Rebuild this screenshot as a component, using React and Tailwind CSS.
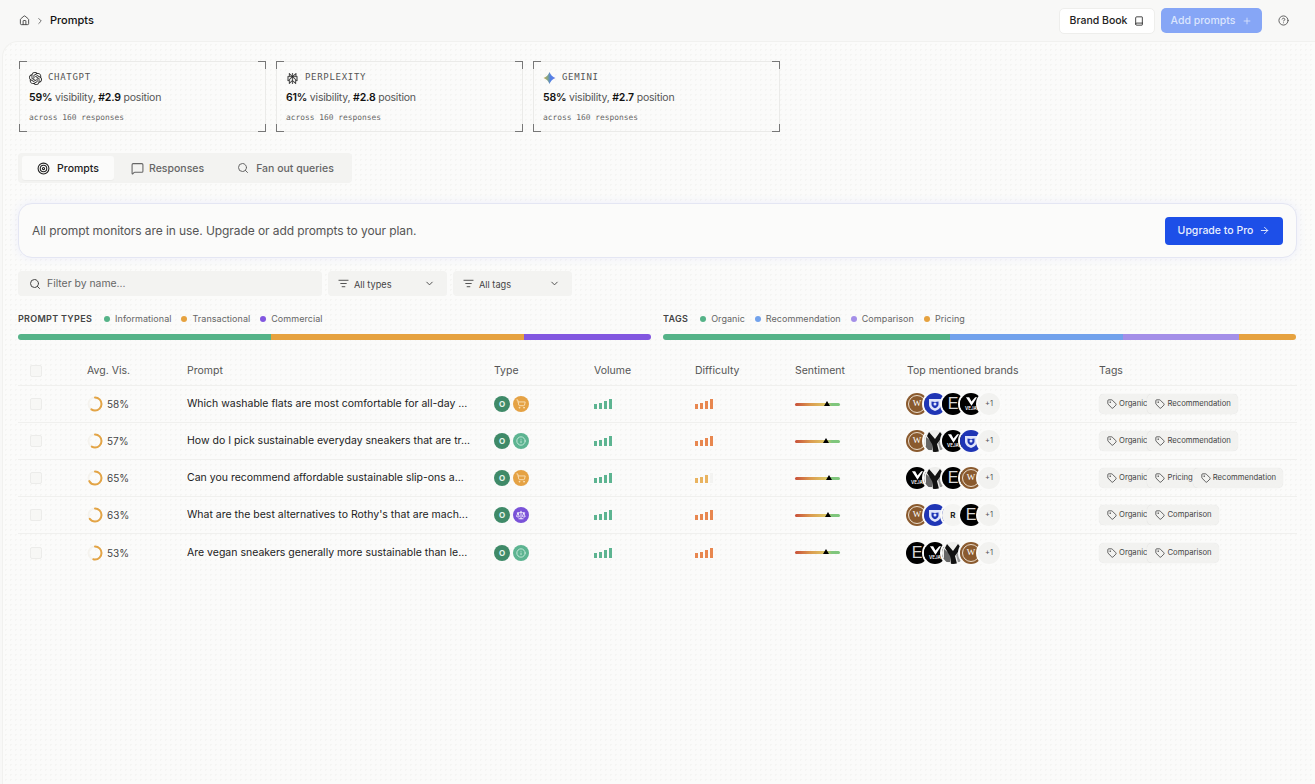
import { House, ChevronRight, Book, Plus, CircleHelp, Target, MessageSquare, Search, ListFilter, ChevronDown, ArrowRight, Tag, ShoppingCart, Info, Scale } from 'lucide-react';
import { SiOpenai, SiPerplexity } from 'react-icons/si';

const ENGINES = [
  { name: 'CHATGPT', vis: '59%', pos: '#2.9', logo: <SiOpenai size={13} className="text-[#222]" /> },
  { name: 'PERPLEXITY', vis: '61%', pos: '#2.8', logo: <SiPerplexity size={11} stroke="currentColor" strokeWidth={0.6} className="text-[#222]" /> },
  { name: 'GEMINI', vis: '58%', pos: '#2.7', logo: <GeminiLogo /> },
];

const ROWS = [
  { vis: 58, prompt: 'Which washable flats are most comfortable for all-day ...', type: 'cart', diff: 4, mark: 32, brands: ['w', 'c', 'e', 'v'], tags: ['Organic', 'Recommendation'] },
  { vis: 57, prompt: 'How do I pick sustainable everyday sneakers that are tr...', type: 'info', diff: 4, mark: 31, brands: ['w', 'm', 'v', 'c'], tags: ['Organic', 'Recommendation'] },
  { vis: 65, prompt: 'Can you recommend affordable sustainable slip-ons a...', type: 'cart', diff: 3, mark: 34, brands: ['v', 'm', 'e', 'w'], tags: ['Organic', 'Pricing', 'Recommendation'] },
  { vis: 63, prompt: "What are the best alternatives to Rothy's that are mach...", type: 'scale', diff: 4, mark: 33, brands: ['w', 'c', 'r', 'e'], tags: ['Organic', 'Comparison'] },
  { vis: 53, prompt: 'Are vegan sneakers generally more sustainable than le...', type: 'info', diff: 4, mark: 31, brands: ['e', 'v', 'm', 'w'], tags: ['Organic', 'Comparison'] },
];

const ROW_GRID = 'grid grid-cols-[69px_100px_307px_100px_101px_100px_112px_192px_1fr] items-center';

function GeminiLogo() {
  return (
    <svg width="14" height="14" viewBox="0 0 24 24">
      <defs>
        <linearGradient id="gem" x1="0" y1="0.5" x2="1" y2="0.5">
          <stop offset="0" stopColor="#c9a94a" />
          <stop offset="0.35" stopColor="#7fa58a" />
          <stop offset="0.6" stopColor="#4f7fe8" />
          <stop offset="1" stopColor="#6f7fe0" />
        </linearGradient>
      </defs>
      <path d="M12 1Q15 9 23 12 15 15 12 23 9 15 1 12 9 9 12 1z" fill="url(#gem)" />
    </svg>
  );
}

function Corners() {
  return (
    <>
      <span className="absolute -left-px -top-px h-2 w-2 border-l border-t border-[#777]" />
      <span className="absolute -right-px -top-px h-2 w-2 border-r border-t border-[#777]" />
      <span className="absolute -left-px -bottom-px h-2 w-2 border-l border-b border-[#777]" />
      <span className="absolute -right-px -bottom-px h-2 w-2 border-r border-b border-[#777]" />
    </>
  );
}

function EngineCard({ engine }) {
  return (
    <div className="relative h-[71px] w-[247px] border border-[#ebebe9] pl-[9px] pt-[9px]">
      <Corners />
      <div className="flex h-[14px] items-center gap-[6px]">
        <span className="flex w-[13px] justify-center">{engine.logo}</span>
        <span className="font-['DejaVu_Sans_Mono',monospace] text-[9px] tracking-[0.7px] text-[#555]">{engine.name}</span>
      </div>
      <p className="mt-[6px] text-[10.5px] leading-[14px] tracking-[-0.2px] text-[#555]">
        <b className="font-semibold text-[#111]">{engine.vis}</b> visibility, <b className="font-semibold text-[#111]">{engine.pos}</b> position
      </p>
      <p className="mt-[7px] font-['DejaVu_Sans_Mono',monospace] text-[7.9px] leading-[12px] text-[#666]">across 160 responses</p>
    </div>
  );
}

function LegendBar({ title, items, className }) {
  return (
    <div className={className}>
      <div className="flex h-[12px] items-center">
        <span className="mr-[12px] text-[9px] font-semibold tracking-[0.3px] text-[#444]">{title}</span>
        {items.map((item) => (
          <span key={item.label} className="mr-[10px] flex items-center gap-[5px] text-[9px] tracking-[0.05px] text-[#666]">
            <span className={`h-[6px] w-[6px] rounded-full ${item.color}`} />
            {item.label}
          </span>
        ))}
      </div>
      <div className="mt-[9px] flex h-[6px] overflow-hidden rounded-full">
        {items.map((item) => (
          <span key={item.label} className={`h-full ${item.color} ${item.width}`} />
        ))}
      </div>
    </div>
  );
}

function Ring({ value }) {
  const c = 2 * Math.PI * 6.5;
  return (
    <svg width="16" height="16" viewBox="0 0 16 16" className="-rotate-90">
      <circle cx="8" cy="8" r="6.5" fill="none" stroke="#f5f3ee" strokeWidth="2" />
      <circle cx="8" cy="8" r="6.5" fill="none" stroke="#e3a445" strokeWidth="2" strokeLinecap="round" strokeDasharray={`${(c * value) / 100} ${c}`} />
    </svg>
  );
}

function TypeBadge({ type }) {
  if (type === 'cart') {
    return (
      <span className="flex h-4 w-4 items-center justify-center rounded-full bg-[#e5a244] text-[#fbe7c4]">
        <ShoppingCart size={10} />
      </span>
    );
  }
  if (type === 'scale') {
    return (
      <span className="flex h-4 w-4 items-center justify-center rounded-full bg-[#7a52d8] text-white">
        <Scale size={10} />
      </span>
    );
  }
  return (
    <span className="flex h-4 w-4 items-center justify-center rounded-full bg-[#5db491] text-[#d5f0e3]">
      <Info size={10} />
    </span>
  );
}

function Bars({ filled, color, empty }) {
  const heights = ['h-[5px]', 'h-[6px]', 'h-[8px]', 'h-[10px]'];
  return (
    <div className="flex items-end gap-[2px]">
      {heights.map((h, i) => (
        <span key={h} className={`w-[3px] ${h} ${i < filled ? color : empty}`} />
      ))}
    </div>
  );
}

function Sentiment({ mark }) {
  return (
    <div className="relative h-[3px] w-[45px] rounded-full bg-[linear-gradient(90deg,#c8503a_0%,#dc9b4f_35%,#dcc765_68%,#7fc67c_82%,#7fc67c_100%)]">
      <span className="absolute -top-[2px] -ml-[3px] h-0 w-0 border-x-[3px] border-b-[5px] border-x-transparent border-b-black" style={{ left: mark }} />
    </div>
  );
}

function BrandLogo({ id }) {
  if (id === 'w') {
    return (
      <span className="flex h-full w-full items-center justify-center rounded-full bg-[#8a5a2e]">
        <span className="flex h-[18px] w-[18px] items-center justify-center rounded-full border border-[#e9dccb] font-['Liberation_Serif',serif] text-[9px] text-white">W</span>
      </span>
    );
  }
  if (id === 'c') {
    return (
      <span className="block h-full w-full rounded-full bg-[#1f35b5]">
        <svg viewBox="0 0 22 22" className="h-full w-full">
          <path d="M5 6c4 0 8 0 12 0v5.500c0 3.500-3 5.500-6 6.500-3-1-6-3-6-6.500z" fill="#dfe4fa" />
          <path d="M7.500 8.500c2.300.5 4.700.5 7 0v3c0 2-1.700 3-3.500 3.800-1.800-.8-3.500-1.800-3.500-3.800z" fill="#1f35b5" />
          <circle cx="11" cy="11" r="1.500" fill="#dfe4fa" />
        </svg>
      </span>
    );
  }
  if (id === 'e') {
    return <span className="flex h-full w-full items-center justify-center rounded-full bg-black font-['Liberation_Sans',sans-serif] text-[16px] text-[#d8d8d8]">E</span>;
  }
  if (id === 'v') {
    return (
      <span className="flex h-full w-full flex-col items-center justify-center rounded-full bg-black text-white">
        <svg viewBox="0 0 14 9" className="h-[9px] w-[13px]">
          <path d="M1 0h3.500L7 4.500 11 0h2L7 9z" fill="#fff" />
        </svg>
        <span className="text-[4.5px] font-semibold leading-[5px]">VEJA</span>
      </span>
    );
  }
  if (id === 'm') {
    return (
      <span className="block h-full w-full overflow-hidden rounded-full bg-[#eeeeec]">
        <svg viewBox="0 0 22 22" className="h-full w-full">
          <path d="M2 20V7l6 5v8z" fill="#666" />
          <path d="M5 2l6 7 5-7 3 4-6 8 2 8h-6l-1-8-5-8z" fill="#111" />
          <path d="M14 13l4-5 2 2v10h-4z" fill="#999" />
        </svg>
      </span>
    );
  }
  return <span className="flex h-full w-full items-center justify-center rounded-full bg-[#f4f4f2] text-[8px] font-bold text-[#222]">R</span>;
}

function Brands({ ids }) {
  return (
    <div className="-ml-[3px] flex">
      {ids.map((id, i) => (
        <span key={id} className={`h-[26px] w-[26px] rounded-full border-2 border-[#fbfbfa] ${i > 0 ? '-ml-2' : ''}`}>
          <BrandLogo id={id} />
        </span>
      ))}
      <span className="-ml-2 flex h-[26px] w-[26px] items-center justify-center rounded-full border-2 border-[#fbfbfa] bg-[#f2f2f0] text-[7.5px] text-[#555]">+1</span>
    </div>
  );
}

function Tags({ tags }) {
  return (
    <div className="flex w-fit">
      {tags.map((tag, i) => (
        <span key={tag} className={`flex h-5 items-center gap-[2px] rounded-[5px] bg-[#f2f2f0] pl-[8px] pr-[7px] text-[7.7px] text-[#444] shadow-[0_0_1px_rgba(0,0,0,0.12)] ${i > 0 ? '-ml-[7px]' : ''}`}>
          <Tag size={10} className="text-[#444]" />
          {tag}
        </span>
      ))}
    </div>
  );
}

function FilterSelect({ label }) {
  return (
    <div className="flex w-[119px] items-center rounded-[4px] bg-[#f3f3f1] pl-[10px] pr-[12px] text-[9.2px] text-[#444]">
      <ListFilter size={11} className="mr-[5px]" />
      <span className="pt-[2px]">{label}</span>
      <ChevronDown size={11} className="ml-auto" />
    </div>
  );
}

export default function App() {
  return (
    <div className="h-[784px] overflow-hidden bg-[#f8f8f7] font-['Inter',sans-serif] text-[#222]">
      {/* Top bar */}
      <header className="flex h-[41px] items-center pl-[19px] pr-[26px]">
        <House size={11} className="text-[#444]" />
        <ChevronRight size={10} className="ml-[5px] text-[#555]" />
        <span className="ml-[5px] text-[11px] font-medium text-[#111]">Prompts</span>
        <div className="ml-auto flex items-center">
          <button className="flex h-[26px] w-[96px] items-center justify-center gap-[7px] rounded-[5px] border border-[#eeeeec] bg-white text-[10.5px] font-medium text-[#222]">
            Brand Book
            <Book size={10} />
          </button>
          <button className="ml-[6px] flex h-[25px] w-[101px] items-center justify-center gap-[7px] rounded-[5px] bg-[#86a6f6] text-[10.5px] font-medium text-[#dbe5fd]">
            Add prompts
            <Plus size={10} />
          </button>
          <CircleHelp size={11} className="ml-[16px] text-[#555]" />
        </div>
      </header>

      <main className="ml-[2px] h-[743px] rounded-tl-2xl border-l border-t border-[#f1f1ef] bg-[#fbfbfa] bg-[radial-gradient(#f5f5f3_1px,transparent_1px)] bg-size-[5px_5px] pl-[15px] pr-[18px] pt-[19px]">
        {/* Engine cards */}
        <div className="flex gap-[10px] pl-px">
          {ENGINES.map((e) => (
            <EngineCard key={e.name} engine={e} />
          ))}
        </div>

        {/* Tabs */}
        <div className="mt-[21px] flex h-[30px] w-[334px] items-center rounded-[4px] bg-[#f3f3f1] pl-[4px]">
          <div className="flex h-[24px] w-[92px] items-center justify-center gap-[7px] rounded-[3px] bg-[#fbfbfa] text-[10.5px] font-medium text-[#222] shadow-[0_1px_1px_rgba(0,0,0,0.03)]">
            <Target size={13} />
            <span className="pt-[2px]">Prompts</span>
          </div>
          <div className="ml-[17px] flex items-center gap-[5px] text-[10.5px] font-medium text-[#666]">
            <MessageSquare size={13} />
            <span className="pt-[2px]">Responses</span>
          </div>
          <div className="ml-[33px] flex items-center gap-[7px] text-[10.5px] font-medium text-[#666]">
            <Search size={12} />
            <span className="pt-[2px]">Fan out queries</span>
          </div>
        </div>

        {/* Upgrade banner */}
        <div className="mt-[20px] flex h-[55px] items-center justify-between rounded-[14px] border border-[#e4e6f3] bg-[#fbfbfa] pl-[13px] pr-[13px] shadow-[0_0_10px_rgba(110,130,255,0.1)]">
          <p className="text-[12px] tracking-[-0.08px] text-[#555]">All prompt monitors are in use. Upgrade or add prompts to your plan.</p>
          <button className="flex h-[28px] w-[118px] items-center justify-center gap-[6px] rounded-[4px] bg-[#1d4fe8] text-[10.5px] font-medium text-[#e8eefe]">
            Upgrade to Pro
            <ArrowRight size={11} />
          </button>
        </div>

        {/* Filters */}
        <div className="mt-[13px] flex h-[25px] gap-[6px]">
          <div className="flex w-[304px] items-center gap-[6px] rounded-[4px] bg-[#f3f3f1] pl-[11px] text-[10.4px] text-[#666]">
            <Search size={12} className="text-[#444]" />
            Filter by name...
          </div>
          <FilterSelect label="All types" />
          <FilterSelect label="All tags" />
        </div>

        {/* Distribution bars */}
        <div className="mt-[17px] flex gap-[12px]">
          <LegendBar
            className="w-[633px]"
            title="PROMPT TYPES"
            items={[
              { label: 'Informational', color: 'bg-[#55b388]', width: 'w-[40%]' },
              { label: 'Transactional', color: 'bg-[#e6a23f]', width: 'w-[40%]' },
              { label: 'Commercial', color: 'bg-[#8257e0]', width: 'w-[20%]' },
            ]}
          />
          <LegendBar
            className="w-[633px]"
            title="TAGS"
            items={[
              { label: 'Organic', color: 'bg-[#55b388]', width: 'w-[45.4%]' },
              { label: 'Recommendation', color: 'bg-[#72a2ec]', width: 'w-[27.3%]' },
              { label: 'Comparison', color: 'bg-[#a48fe8]', width: 'w-[18.3%]' },
              { label: 'Pricing', color: 'bg-[#e6a23f]', width: 'w-[9%]' },
            ]}
          />
        </div>

        {/* Table */}
        <div className="mt-[16px]">
          <div className={`${ROW_GRID} h-[30px] border-b border-[#f0f0ee] text-[10.5px] text-[#555]`}>
            <span className="ml-[12px] h-3 w-3 rounded-[2px] border border-[#ececea] bg-[#f7f7f5]" />
            <span>Avg. Vis.</span>
            <span>Prompt</span>
            <span>Type</span>
            <span>Volume</span>
            <span>Difficulty</span>
            <span>Sentiment</span>
            <span>Top mentioned brands</span>
            <span>Tags</span>
          </div>
          {ROWS.map((row) => (
            <div key={row.vis} className={`${ROW_GRID} h-[37px] border-b border-[#f0f0ee] last:border-b-0`}>
              <span className="ml-[12px] h-3 w-3 rounded-[2px] border border-[#ececea] bg-[#f7f7f5]" />
              <div className="flex items-center gap-[4px]">
                <Ring value={row.vis} />
                <span className="pt-[1px] text-[10px] text-[#444]">{row.vis}%</span>
              </div>
              <span className="text-[10.5px] text-[#222]">{row.prompt}</span>
              <div className="flex items-center gap-[3px]">
                <span className="flex h-4 w-4 items-center justify-center rounded-full bg-[#3f8a68] text-[8px] font-bold text-[#e8f5ee]">O</span>
                <TypeBadge type={row.type} />
              </div>
              <Bars filled={4} color="bg-[#5db491]" empty="bg-[#f1f1ef]" />
              <Bars filled={row.diff} color={row.diff === 4 ? 'bg-[#e8874f]' : 'bg-[#e9b35f]'} empty="bg-[#f3f3f1]" />
              <Sentiment mark={row.mark} />
              <Brands ids={row.brands} />
              <Tags tags={row.tags} />
            </div>
          ))}
        </div>
      </main>
    </div>
  );
}
